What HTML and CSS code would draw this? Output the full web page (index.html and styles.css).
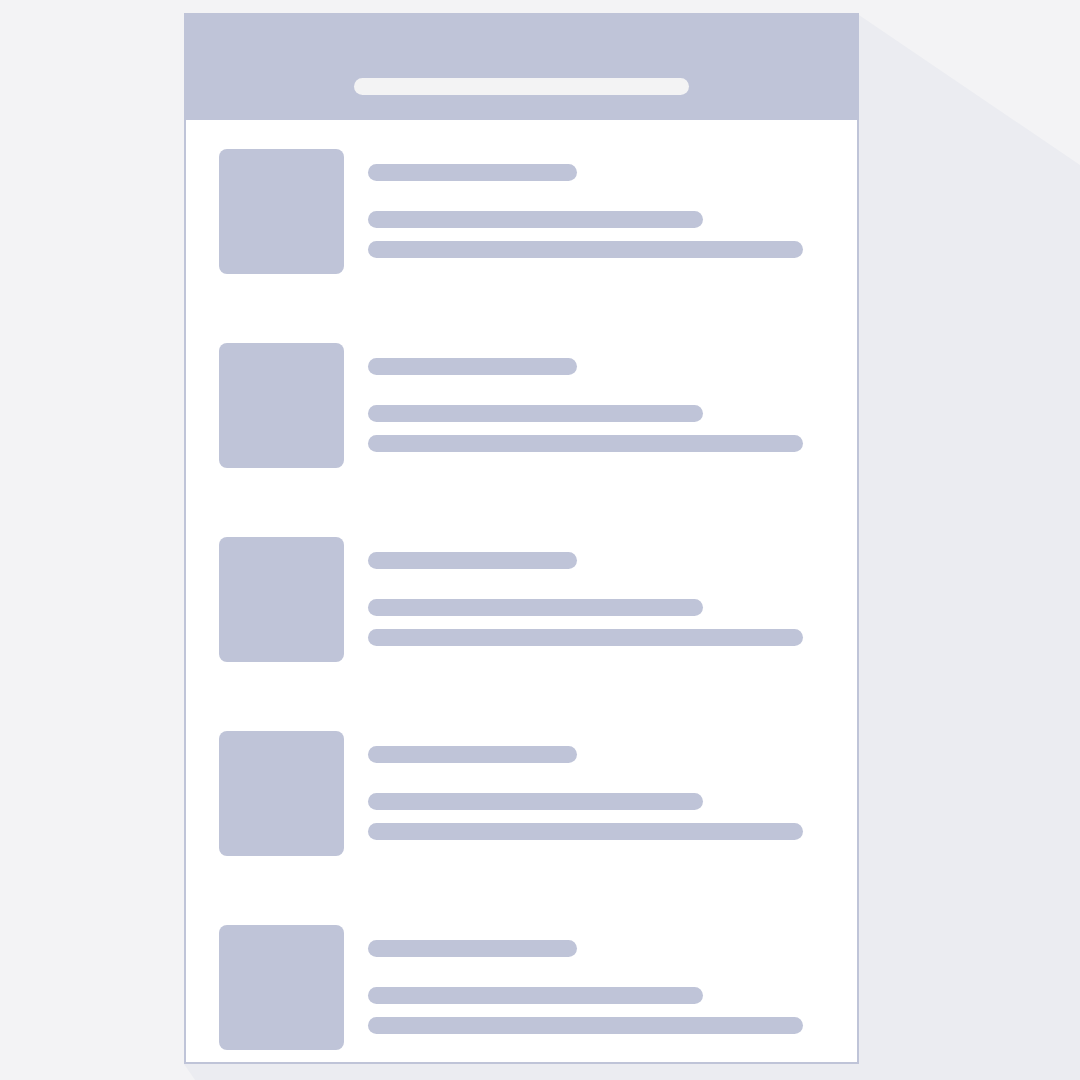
FILE: index.html
```
<!DOCTYPE html>
<html lang="en">
<head>
<meta charset="UTF-8">
<meta name="viewport" content="width=device-width, initial-scale=1.0">
<title>List wireframe</title>
<link rel="stylesheet" href="styles.css">
</head>
<body>
  <div class="page">
    <div class="shadow"></div>
    <main class="card">
      <header class="card-header">
        <div class="line line-title"></div>
      </header>
      <ul class="list">
        <li class="item">
          <div class="thumb"></div>
          <div class="lines">
            <div class="line line-short"></div>
            <div class="line line-medium"></div>
            <div class="line"></div>
          </div>
        </li>
        <li class="item">
          <div class="thumb"></div>
          <div class="lines">
            <div class="line line-short"></div>
            <div class="line line-medium"></div>
            <div class="line"></div>
          </div>
        </li>
        <li class="item">
          <div class="thumb"></div>
          <div class="lines">
            <div class="line line-short"></div>
            <div class="line line-medium"></div>
            <div class="line"></div>
          </div>
        </li>
        <li class="item">
          <div class="thumb"></div>
          <div class="lines">
            <div class="line line-short"></div>
            <div class="line line-medium"></div>
            <div class="line"></div>
          </div>
        </li>
        <li class="item">
          <div class="thumb"></div>
          <div class="lines">
            <div class="line line-short"></div>
            <div class="line line-medium"></div>
            <div class="line"></div>
          </div>
        </li>
      </ul>
    </main>
  </div>
</body>
</html>
```
FILE: styles.css
```
* {
  box-sizing: border-box;
}
body {
  margin: 0;
  background-color: #f3f3f5;
  font-family: "Liberation Sans", Arial, sans-serif;
}
.page {
  display: grid;
  grid-template-columns: 184fr 675fr 221fr;
  padding-top: 13px;
}
/* long shadow, starts at the card corners and runs off the page */
.shadow {
  grid-column: 2 / 4;
  grid-row: 1;
  background-color: #ebecf1;
  clip-path: polygon(75% 0, 100% 152px, 100% 100%, 11px 100%, 0 calc(100% - 16px));
}
.card {
  grid-column: 2;
  grid-row: 1;
  z-index: 1;
  margin-bottom: 16px;
  background-color: white;
  border: 2px solid #bfc4d8;
}
.card-header {
  display: flex;
  justify-content: center;
  padding: 63px 0 25px;
  background-color: #bfc4d8;
}
.list {
  display: flex;
  flex-direction: column;
  gap: 69px;
  margin: 0;
  padding: 29px 54px 12px 33px;
  list-style: none;
}
.item {
  display: flex;
  gap: 24px;
}
.thumb {
  flex: none;
  width: 125px;
  height: 125px;
  border-radius: 8px;
  background-color: #bfc4d8;
}
.lines {
  flex: 1;
  padding-top: 15px;
}
.line {
  height: 17px;
  border-radius: 9px;
  background-color: #bfc4d8;
}
.line-title {
  width: 50%;
  background-color: #f3f3f4;
}
.line-short {
  width: 48%;
  margin-bottom: 30px;
}
.line-medium {
  width: 77%;
  margin-bottom: 13px;
}
```
